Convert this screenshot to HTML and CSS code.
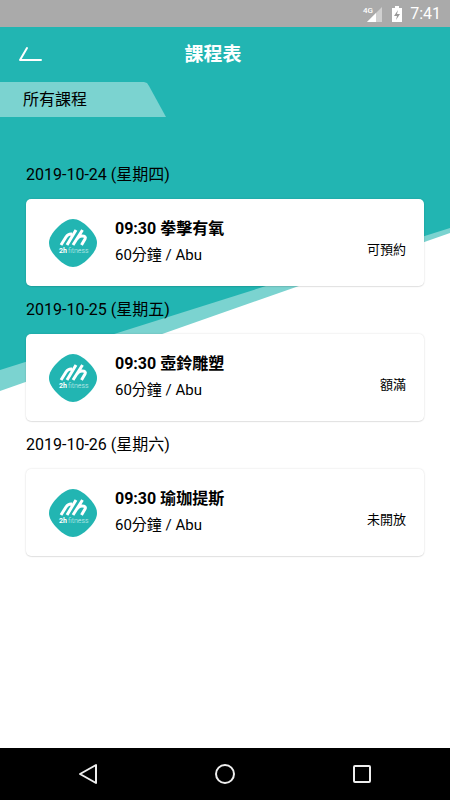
FILE: index.html
```html
<!DOCTYPE html>
<html lang="zh-Hant">
<head>
<meta charset="utf-8">
<meta name="viewport" content="width=device-width, initial-scale=1">
<title>課程表</title>
<link rel="stylesheet" href="styles.css">
</head>
<body>
<div class="screen">
  <div class="status">
    <svg class="signal" viewBox="0 0 20 18" aria-hidden="true">
      <path d="M19 2V17H4Z" fill="#d0d0d0"/><path d="M13 8V17H4Z" fill="#fff"/>
      <text x="0" y="8" class="network">4G</text>
    </svg>
    <svg class="battery" viewBox="0 0 12 16" aria-hidden="true">
      <path d="M4 0H8V2H11V16H1V2H4Z" fill="#fff"/><path d="M7 4L3 10H6L5 14L9 8H6Z" fill="#999"/>
    </svg>
    <time>7:41</time>
  </div>
  <main class="content">
    <header class="bar">
      <button class="back" aria-label="返回"><svg viewBox="0 0 26 18"><path d="M9 2L2 14H23"/></svg></button>
      <h1>課程表</h1>
    </header>
    <button class="filter">所有課程</button>
    <section class="list">
      <h2>2019-10-24 (星期四)</h2>
      <article class="card">
        <svg class="logo" viewBox="0 0 50 50">
          <path class="logo-shape" d="M25 1C30 1 35 4 40.500 9.500C46 15 49 20 49 25C49 30 46 35 40.500 40.500C35 46 30 49 25 49C20 49 15 46 9.500 40.500C4 35 1 30 1 25C1 20 4 15 9.500 9.500C15 4 20 1 25 1Z"/>
          <path class="logo-mark" d="M13 27L18 19Q20 16 23 16H24M19 27L28 12M25 27L34.500 12M29 21Q31 18 34 18Q38.500 18 37 21L33.500 27"/>
          <text x="11" y="35" class="logo-text"><tspan class="logo-bold">2h</tspan><tspan dx="1">fitness</tspan></text>
        </svg>
        <div class="info"><h3>09:30 拳擊有氧</h3><p>60分鐘 / Abu</p></div>
        <span class="state">可預約</span>
      </article>
      <h2>2019-10-25 (星期五)</h2>
      <article class="card">
        <svg class="logo" viewBox="0 0 50 50">
          <path class="logo-shape" d="M25 1C30 1 35 4 40.500 9.500C46 15 49 20 49 25C49 30 46 35 40.500 40.500C35 46 30 49 25 49C20 49 15 46 9.500 40.500C4 35 1 30 1 25C1 20 4 15 9.500 9.500C15 4 20 1 25 1Z"/>
          <path class="logo-mark" d="M13 27L18 19Q20 16 23 16H24M19 27L28 12M25 27L34.500 12M29 21Q31 18 34 18Q38.500 18 37 21L33.500 27"/>
          <text x="11" y="35" class="logo-text"><tspan class="logo-bold">2h</tspan><tspan dx="1">fitness</tspan></text>
        </svg>
        <div class="info"><h3>09:30 壺鈴雕塑</h3><p>60分鐘 / Abu</p></div>
        <span class="state">額滿</span>
      </article>
      <h2>2019-10-26 (星期六)</h2>
      <article class="card">
        <svg class="logo" viewBox="0 0 50 50">
          <path class="logo-shape" d="M25 1C30 1 35 4 40.500 9.500C46 15 49 20 49 25C49 30 46 35 40.500 40.500C35 46 30 49 25 49C20 49 15 46 9.500 40.500C4 35 1 30 1 25C1 20 4 15 9.500 9.500C15 4 20 1 25 1Z"/>
          <path class="logo-mark" d="M13 27L18 19Q20 16 23 16H24M19 27L28 12M25 27L34.500 12M29 21Q31 18 34 18Q38.500 18 37 21L33.500 27"/>
          <text x="11" y="35" class="logo-text"><tspan class="logo-bold">2h</tspan><tspan dx="1">fitness</tspan></text>
        </svg>
        <div class="info"><h3>09:30 瑜珈提斯</h3><p>60分鐘 / Abu</p></div>
        <span class="state">未開放</span>
      </article>
    </section>
  </main>
  <nav class="nav">
    <button aria-label="返回"><svg viewBox="0 0 22 22"><path d="M19 2V20L3 11Z"/></svg></button>
    <button aria-label="主畫面"><svg viewBox="0 0 22 22"><circle cx="11" cy="11" r="9"/></svg></button>
    <button aria-label="最近使用"><svg viewBox="0 0 22 22"><rect x="3" y="3" width="16" height="16" rx="1"/></svg></button>
  </nav>
</div>
</body>
</html>
```
FILE: styles.css
```css
* { box-sizing: border-box; }
body, h1, h2, h3, p { margin: 0; }
body {
  font-family: Roboto, "Noto Sans CJK TC", sans-serif;
  font-size: 16px;
  color: #000;
  background: #fff;
}
button {
  padding: 0;
  border: 0;
  background: none;
  font: inherit;
  color: inherit;
}
svg { display: block; }
.screen { display: flex; flex-direction: column; min-height: 100vh; }

.status {
  display: flex;
  align-items: center;
  justify-content: flex-end;
  height: 27px;
  padding-right: 9px;
  background: #aaa;
  color: #fff;
  line-height: 27px;
}
.signal { width: 20px; height: 18px; margin-right: 8px; overflow: visible; }
.network { font-size: 8px; font-weight: 500; fill: #fff; }
.battery { width: 12px; height: 16px; margin-right: 7px; }

.content { position: relative; isolation: isolate; flex: 1; }
.content::before, .content::after {
  content: "";
  position: absolute;
  inset: 0;
  z-index: -1;
}
.content::before {
  background: #7bd3d0;
  clip-path: polygon(0 0, 100% 0, 100% 206px, 0 364px);
}
.content::after {
  background: #22b5b2;
  clip-path: polygon(0 0, 100% 0, 100% 201px, 0 343px);
}
.bar {
  display: grid;
  grid-template-columns: 64px 1fr 88px;
  align-items: center;
  height: 55px;
  color: #fff;
}
.bar h1 { font-size: 19px; line-height: 28px; text-align: center; }
.back svg { width: 26px; height: 18px; margin-left: 18px; }
.back path { fill: none; stroke: #fff; stroke-width: 2; stroke-linecap: round; stroke-linejoin: round; }
.filter {
  display: block;
  width: 166px;
  height: 35px;
  padding-left: 23px;
  background: #7bd3d0;
  clip-path: polygon(0 0, 144px 0, 147px 1px, 149px 4px, 100% 100%, 0 100%);
  line-height: 35px;
  text-align: left;
}
.list { padding: 34px 26px 0; }
.list h2 { font-size: 16px; font-weight: 400; line-height: 48px; }
.card {
  display: flex;
  height: 87px;
  padding: 17px 18px 0 22px;
  border-radius: 5px;
  background: #fff;
  box-shadow: 0 0 2px rgba(0, 0, 0, .15), 0 1px 1px rgba(0, 0, 0, .08);
}
.logo { width: 50px; height: 50px; margin: 2px 17px 0 0; }
.logo-shape { fill: #22b5b2; }
.logo-mark { fill: none; stroke: #fff; stroke-width: 3; stroke-linejoin: round; }
.logo-text { font-size: 7px; font-weight: 300; fill: #d5f1f0; }
.logo-bold { font-weight: 700; fill: #fff; }
.info { flex: 1; }
.info h3 { font-size: 16px; line-height: 26px; }
.info p { font-size: 15px; line-height: 26px; }
.state { align-self: flex-start; margin-top: 24px; font-size: 13px; line-height: 20px; }

.nav {
  display: flex;
  justify-content: space-between;
  align-items: center;
  height: 52px;
  padding: 0 77px;
  background: #000;
}
.nav button { flex: 0 0 22px; }
.nav svg { width: 22px; height: 22px; fill: none; stroke: #eee; stroke-width: 2; stroke-linejoin: round; }
```
